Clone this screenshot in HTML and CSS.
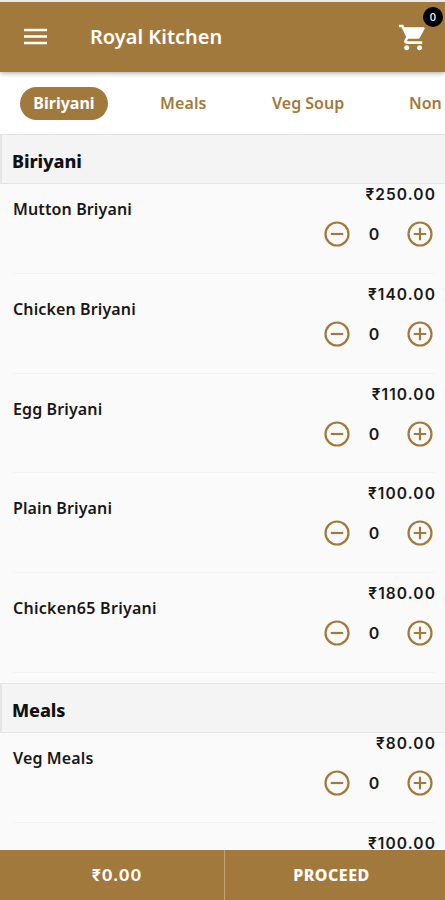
FILE: index.html
```html
<!DOCTYPE html>
<html lang="en">
<head>
<meta charset="utf-8">
<title>Royal Kitchen</title>
<link rel="stylesheet" href="styles.css">
</head>
<body>
<svg width="0" height="0" class="defs">
  <symbol id="minus" viewBox="0 0 26 26"><circle cx="13" cy="13" r="11.5"/><path d="M6.8 13h12.4"/></symbol>
  <symbol id="plus" viewBox="0 0 26 26"><circle cx="13" cy="13" r="11.5"/><path d="M6.8 13h12.4M13 6.8v12.4"/></symbol>
</svg>
<div class="app">
  <header class="bar">
    <svg class="menu" viewBox="0 0 24 17"><path d="M0 1.7h24M0 8.5h24M0 15.3h24"/></svg>
    <h1>Royal Kitchen</h1>
    <div class="cart">
      <svg viewBox="1 2 21 20"><path d="M7 18c-1.100 0-1.990.9-1.990 2S5.900 22 7 22s2-.9 2-2-.9-2-2-2zM1 2v2h2l3.600 7.590-1.350 2.450c-.16.28-.25.61-.25.96 0 1.100.9 2 2 2h12v-2H7.420c-.14 0-.25-.11-.25-.25l.03-.12.9-1.630h7.450c.75 0 1.410-.41 1.750-1.030l3.580-6.490A1 1 0 0 0 20 4H5.210l-.94-2H1zm16 16c-1.100 0-1.990.9-1.990 2s.89 2 1.990 2 2-.9 2-2-.9-2-2-2z"/></svg>
      <span class="badge">0</span>
    </div>
  </header>
  <nav class="tabs">
    <a class="active">Biriyani</a><a class="t2">Meals</a><a class="t3">Veg Soup</a><a class="t4">Non</a>
  </nav>
  <main>
    <section>
      <h2>Biriyani</h2>
      <article><h3>Mutton Briyani</h3><div class="side"><p>₹250.00</p><div class="qty"><svg><use href="#minus"/></svg><b>0</b><svg><use href="#plus"/></svg></div></div></article>
      <article><h3>Chicken Briyani</h3><div class="side"><p>₹140.00</p><div class="qty"><svg><use href="#minus"/></svg><b>0</b><svg><use href="#plus"/></svg></div></div></article>
      <article><h3>Egg Briyani</h3><div class="side"><p>₹110.00</p><div class="qty"><svg><use href="#minus"/></svg><b>0</b><svg><use href="#plus"/></svg></div></div></article>
      <article><h3>Plain Briyani</h3><div class="side"><p>₹100.00</p><div class="qty"><svg><use href="#minus"/></svg><b>0</b><svg><use href="#plus"/></svg></div></div></article>
      <article><h3 class="long">Chicken65 Briyani</h3><div class="side"><p>₹180.00</p><div class="qty"><svg><use href="#minus"/></svg><b>0</b><svg><use href="#plus"/></svg></div></div></article>
    </section>
    <section>
      <h2>Meals</h2>
      <article><h3>Veg Meals</h3><div class="side"><p>₹80.00</p><div class="qty"><svg><use href="#minus"/></svg><b>0</b><svg><use href="#plus"/></svg></div></div></article>
      <article><h3 class="next">Chicken Meals</h3><div class="side"><p>₹100.00</p></div></article>
    </section>
  </main>
  <footer><div class="total">₹0.00</div><div class="proceed">PROCEED</div></footer>
</div>
</body>
</html>
```
FILE: styles.css
```css
* { box-sizing: border-box; margin: 0; padding: 0; }
body { font-family: "Noto Sans", "Open Sans", sans-serif; background: #fafafa; overflow: hidden; }
.defs { position: absolute; }
.app { width: 445px; height: 900px; display: flex; flex-direction: column; overflow: hidden; }
.bar { height: 72px; flex: none; border-top: 2px solid #ece9e4; background: #a2793d; display: flex; align-items: center; padding: 0 19px 0 24px; box-shadow: 0 1px 5px rgba(0,0,0,.35); z-index: 1; }
.menu { width: 23px; height: 17px; stroke: #fff; stroke-width: 2.7; margin-bottom: 1px; }
h1 { color: #fff; font-size: 20px; font-weight: 600; line-height: 28px; margin-left: 43px; flex: 1; white-space: nowrap; }
.cart { position: relative; width: 27px; height: 27px; }
.cart svg { width: 27px; height: 27px; fill: #fff; display: block; }
.badge { position: absolute; left: 24px; top: -17px; width: 20px; height: 20px; border-radius: 50%; background: #000; color: #fff; font-size: 11px; font-weight: 500; line-height: 19px; text-align: center; }
.tabs { height: 62px; flex: none; background: #fff; display: flex; align-items: center; padding-left: 20px; color: #a2793d; font-size: 16px; font-weight: 600; white-space: nowrap; }
.tabs .active { background: #a2793d; color: #fff; width: 88px; height: 33px; line-height: 33px; text-align: center; border-radius: 17px; font-weight: 700; }
.t2 { margin-left: 52px; width: 112px; letter-spacing: .1px; }
.t3 { width: 137px; }
main { flex: 1; overflow: hidden; background: #fafafa; }
h2 { height: 50px; background: #f4f4f4; border: 1px solid #e5e5e5; border-width: 1px 0 1px 2px; padding-left: 10px; font-size: 18px; font-weight: 800; line-height: 52px; color: #111; letter-spacing: -.1px; }
article { height: 89.75px; margin: 0 10px 10px 13px; border-bottom: 1px solid #f3f3f3; display: flex; justify-content: space-between; }
h3 { font-size: 16px; font-weight: 600; line-height: 24px; padding-top: 13px; color: #181818; white-space: nowrap; letter-spacing: .12px; }
.long { letter-spacing: .27px; }
.next { padding-top: 11px; }
.side { width: 113px; color: #181818; }
.side p { font-family: Inter, sans-serif; text-align: right; font-size: 15.5px; font-weight: 600; line-height: 21px; letter-spacing: 1.1px; margin-right: -1px; white-space: nowrap; }
.qty { display: flex; justify-content: space-between; align-items: center; height: 26px; margin-top: 16px; padding: 0 2px 0 2px; }
.qty svg { width: 26px; height: 26px; fill: none; stroke: #a2793d; stroke-width: 2.2; }
.qty b { font-family: Inter, sans-serif; font-size: 16px; font-weight: 600; margin-right: 9px; }
footer { height: 50px; flex: none; background: #a2793d; color: #fff; display: flex; font-weight: 800; font-size: 16px; line-height: 50px; text-align: center; }
.total { width: 225px; border-right: 1px solid #c2a171; padding-left: 10px; font-family: Inter, sans-serif; font-weight: 700; letter-spacing: .9px; }
.proceed { flex: 1; padding-right: 7px; letter-spacing: .5px; }
```
